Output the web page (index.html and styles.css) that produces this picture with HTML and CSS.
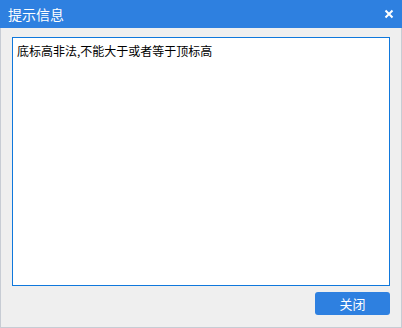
FILE: index.html
```html
<!DOCTYPE html>
<html lang="zh">
<head>
    <meta charset="UTF-8">
    <title>提示信息</title>
    <link rel="stylesheet" href="styles.css">
</head>
<body>
    <div class="dialog">
        <div class="dialog-title">
            <span>提示信息</span>
            <span class="close">
                <svg width="10" height="10" viewBox="0 0 10 10"><path d="M1.5 1.5 L8.5 8.5 M8.5 1.5 L1.5 8.5" stroke="#fff" stroke-width="2"/></svg>
            </span>
        </div>
        <div class="dialog-body">
            <div class="message">底标高非法,不能大于或者等于顶标高</div>
            <div class="actions">
                <button class="btn">关闭</button>
            </div>
        </div>
    </div>
</body>
</html>
```
FILE: styles.css
```css
body {
    margin: 0;
    font-family: "Noto Sans CJK SC", "Noto Sans", sans-serif;
}

.dialog {
    width: 402px;
    height: 328px;
    display: flex;
    flex-direction: column;
    box-sizing: border-box;
}

.dialog-title {
    height: 28px;
    background-color: #2e80e0;
    color: #fff;
    font-size: 14px;
    display: flex;
    align-items: center;
    justify-content: space-between;
    padding: 0 8px 0 8px;
}

.close {
    display: flex;
}

.dialog-body {
    flex: 1;
    background-color: #efefef;
    border: 1px solid #c7ccd4;
    border-top: none;
    padding: 9px 11px 10px 11px;
    display: flex;
    flex-direction: column;
}

.message {
    height: 249px;
    box-sizing: border-box;
    background: #fff;
    border: 1px solid #0f78dc;
    font-size: 12px;
    line-height: 16px;
    padding: 5px 4px;
    color: #000;
}

.actions {
    display: flex;
    justify-content: flex-end;
    margin-top: 6px;
}

.btn {
    width: 75px;
    height: 23px;
    border: none;
    border-radius: 3px;
    background-color: #2e80e0;
    color: #fff;
    font-family: inherit;
    font-size: 13px;
    padding: 0;
}
```
